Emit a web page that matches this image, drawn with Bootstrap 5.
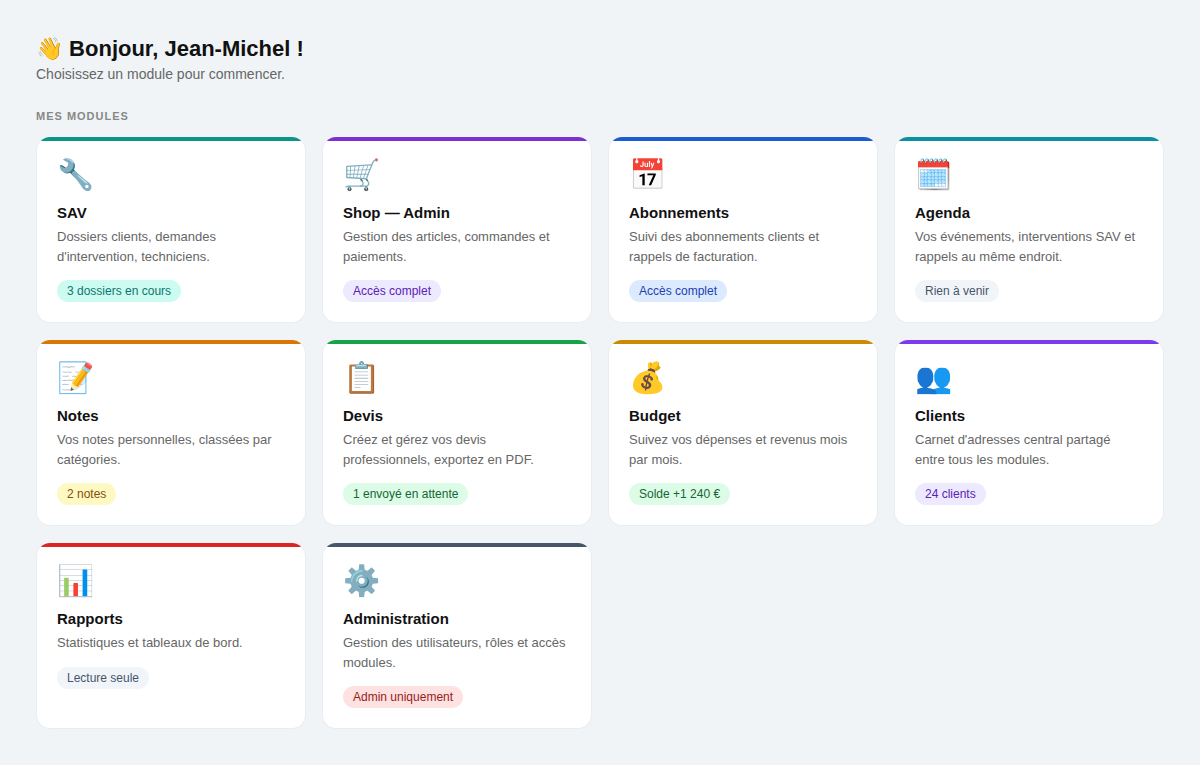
<!DOCTYPE html>
<html lang="fr">
<head>
    <meta charset="UTF-8">
    <meta name="viewport" content="width=device-width, initial-scale=1.0">
    <title>Modules</title>
    <link rel="stylesheet" href="https://cdn.jsdelivr.net/npm/bootstrap@5.3.0/dist/css/bootstrap.min.css">
    <style>
        body { background: #f0f4f7; font-family: "Liberation Sans", Arial, sans-serif; color: #111; }
        .page-wrap { padding: 36px; }
        .hello { font-size: 22px; font-weight: 700; line-height: 26px; margin: 0 0 3px; color: #111; }
        .hello-sub { font-size: 14px; line-height: 18px; color: #666; margin: 0 0 26px; }
        .section-label { font-size: 11px; font-weight: 700; letter-spacing: 1px; line-height: 14px; text-transform: uppercase; color: #888; margin-bottom: 14px; }
        .module-grid { display: grid; grid-template-columns: repeat(4, 270px); gap: 17px 16px; }
        .module-card { height: 186px; background: #fff; border: 1px solid #e8edf2; border-top: 0; border-radius: 14px; padding: 20px 20px 0; }
        .module-card::before { content: ""; position: absolute; top: 0; left: 0; right: 0; height: 4px; background: var(--accent); }
        .module-icon { font-size: 30px; line-height: 36px; margin-bottom: 11px; }
        .module-title { font-size: 15px; font-weight: 700; line-height: 18px; color: #111; margin: 0 0 5px; }
        .module-desc { font-size: 13px; line-height: 19.5px; color: #666; margin: 0 0 12px; }
        .module-tag { display: inline-block; font-size: 12px; line-height: 14px; padding: 4px 10px; }
        .accent-teal { --accent: #0d9488; }
        .accent-purple { --accent: #7e2fd0; }
        .accent-blue { --accent: #1d5bd0; }
        .accent-cyan { --accent: #0e8fa0; }
        .accent-orange { --accent: #d97706; }
        .accent-green { --accent: #16a34a; }
        .accent-gold { --accent: #ca8a04; }
        .accent-violet { --accent: #7c3aed; }
        .accent-red { --accent: #dc2626; }
        .accent-slate { --accent: #475569; }
        .tag-teal { background: #ccfbf1; color: #0f766e; }
        .tag-violet { background: #ede9fe; color: #5b21b6; }
        .tag-blue { background: #dbeafe; color: #1e40af; }
        .tag-slate { background: #f1f5f9; color: #475569; }
        .tag-yellow { background: #fef9c3; color: #854d0e; }
        .tag-green { background: #dcfce7; color: #166534; }
        .tag-red { background: #fee2e2; color: #991b1b; }
    </style>
</head>
<body>
    <div class="page-wrap">
        <h1 class="hello">👋 Bonjour, Jean-Michel !</h1>
        <p class="hello-sub">Choisissez un module pour commencer.</p>
        <div class="section-label">Mes modules</div>
        <div class="module-grid">
            <div class="module-card accent-teal position-relative overflow-hidden">
                <div class="module-icon">🔧</div>
                <h3 class="module-title">SAV</h3>
                <p class="module-desc">Dossiers clients, demandes d'intervention, techniciens.</p>
                <span class="module-tag rounded-pill tag-teal">3 dossiers en cours</span>
            </div>
            <div class="module-card accent-purple position-relative overflow-hidden">
                <div class="module-icon">🛒</div>
                <h3 class="module-title">Shop — Admin</h3>
                <p class="module-desc">Gestion des articles, commandes et paiements.</p>
                <span class="module-tag rounded-pill tag-violet">Accès complet</span>
            </div>
            <div class="module-card accent-blue position-relative overflow-hidden">
                <div class="module-icon">📅</div>
                <h3 class="module-title">Abonnements</h3>
                <p class="module-desc">Suivi des abonnements clients et rappels de facturation.</p>
                <span class="module-tag rounded-pill tag-blue">Accès complet</span>
            </div>
            <div class="module-card accent-cyan position-relative overflow-hidden">
                <div class="module-icon">🗓️</div>
                <h3 class="module-title">Agenda</h3>
                <p class="module-desc">Vos événements, interventions SAV et rappels au même endroit.</p>
                <span class="module-tag rounded-pill tag-slate">Rien à venir</span>
            </div>
            <div class="module-card accent-orange position-relative overflow-hidden">
                <div class="module-icon">📝</div>
                <h3 class="module-title">Notes</h3>
                <p class="module-desc">Vos notes personnelles, classées par catégories.</p>
                <span class="module-tag rounded-pill tag-yellow">2 notes</span>
            </div>
            <div class="module-card accent-green position-relative overflow-hidden">
                <div class="module-icon">📋</div>
                <h3 class="module-title">Devis</h3>
                <p class="module-desc">Créez et gérez vos devis professionnels, exportez en PDF.</p>
                <span class="module-tag rounded-pill tag-green">1 envoyé en attente</span>
            </div>
            <div class="module-card accent-gold position-relative overflow-hidden">
                <div class="module-icon">💰</div>
                <h3 class="module-title">Budget</h3>
                <p class="module-desc">Suivez vos dépenses et revenus mois par mois.</p>
                <span class="module-tag rounded-pill tag-green">Solde +1 240 €</span>
            </div>
            <div class="module-card accent-violet position-relative overflow-hidden">
                <div class="module-icon">👥</div>
                <h3 class="module-title">Clients</h3>
                <p class="module-desc">Carnet d'adresses central partagé entre tous les modules.</p>
                <span class="module-tag rounded-pill tag-violet">24 clients</span>
            </div>
            <div class="module-card accent-red position-relative overflow-hidden">
                <div class="module-icon">📊</div>
                <h3 class="module-title">Rapports</h3>
                <p class="module-desc">Statistiques et tableaux de bord.</p>
                <span class="module-tag rounded-pill tag-slate">Lecture seule</span>
            </div>
            <div class="module-card accent-slate position-relative overflow-hidden">
                <div class="module-icon">⚙️</div>
                <h3 class="module-title">Administration</h3>
                <p class="module-desc">Gestion des utilisateurs, rôles et accès modules.</p>
                <span class="module-tag rounded-pill tag-red">Admin uniquement</span>
            </div>
        </div>
    </div>
    <script src="https://cdn.jsdelivr.net/npm/bootstrap@5.3.0/dist/js/bootstrap.bundle.min.js"></script>
</body>
</html>
